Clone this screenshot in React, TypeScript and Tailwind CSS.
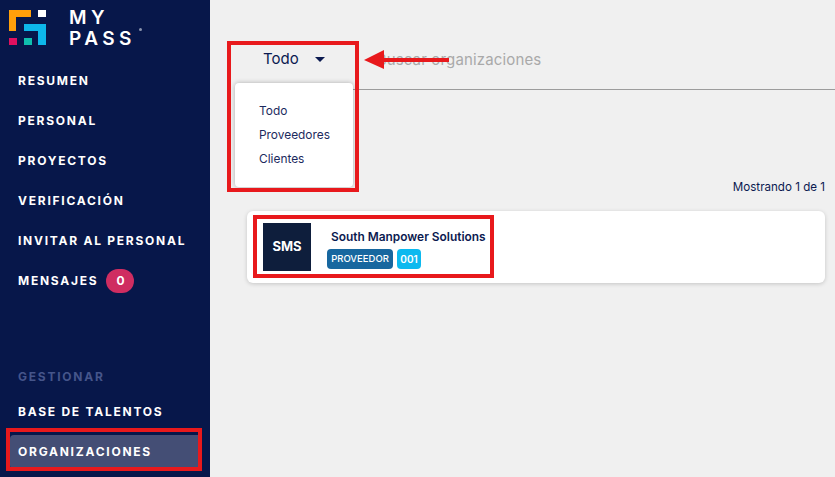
const F = "font-['Inter','Liberation_Sans',sans-serif]";

function Logo() {
  return (
    <svg width="46" height="46" viewBox="0 0 46 46" className="block">
      <path d="M0 0H22V7H7V21H0Z" fill="#ff9f0a" />
      <rect x="29" y="0" width="8" height="7" fill="#ffffff" />
      <path d="M15 14H37V35H29V21H15Z" fill="#0db7ea" />
      <rect x="0" y="28" width="8" height="7" fill="#e0105f" />
      <rect x="15" y="28" width="8" height="7" fill="#10bfae" />
    </svg>
  );
}

function NavItem({ label, children }: { label: string; children?: React.ReactNode }) {
  return (
    <div className="h-10 flex items-center gap-2 pl-[18px] text-white text-[12px] font-bold tracking-[1.75px] whitespace-nowrap">
      {label}
      {children}
    </div>
  );
}

export default function App() {
  return (
    <div className={`${F} relative flex h-[477px] w-[835px] overflow-hidden bg-[#f0f0f0]`}>
      <aside className="w-[210px] shrink-0 bg-[#07174a] flex flex-col">
        <div className="flex pl-[9px] pt-[10px] h-[61px]">
          <Logo />
          <div className="ml-[14px] -mt-[3px] text-white text-[19px] leading-[21px] font-semibold tracking-[4.4px] relative">
            <div>MY</div>
            <div>PASS</div>
            <span className="absolute left-[70px] top-[21px] h-[3px] w-[3px] rounded-full bg-[#8a94ad]" />
          </div>
        </div>
        <NavItem label="RESUMEN" />
        <NavItem label="PERSONAL" />
        <NavItem label="PROYECTOS" />
        <NavItem label="VERIFICACIÓN" />
        <NavItem label="INVITAR AL PERSONAL" />
        <NavItem label="MENSAJES">
          <span className="h-6 w-7 rounded-full bg-[#cf2d61] flex items-center justify-center tracking-normal text-[12px]">0</span>
        </NavItem>
        <div className="mt-[61px] pl-[18px] h-[30px] flex items-center text-[#45558a] text-[12px] font-bold tracking-[1.75px]">GESTIONAR</div>
        <NavItem label="BASE DE TALENTOS" />
        <div className="h-[34px] mt-[3px] ml-[10px] w-[188px] rounded-l-[4px] bg-[#444e75] flex items-center pl-2 text-white text-[12px] font-bold tracking-[1.75px]">ORGANIZACIONES</div>
      </aside>

      <main className="flex-1 relative">
        <div className="ml-[53px] mt-[47px] flex items-center h-6 text-[#0b1a50] text-[15px]">
          Todo
          <span className="ml-[16px] h-0 w-0 border-x-[5px] border-t-[5px] border-x-transparent border-t-[#0b1a50]" />
          <span className="ml-[52px] mt-[2px] text-[#a9a9a9] text-[15px] tracking-[0.15px]">Buscar organizaciones</span>
        </div>
        <div className="ml-[143px] mt-[18px] h-px bg-[#9c9c9c]" />
        <div className="mt-[90px] pr-[10px] text-right text-[11.6px] leading-[14px] text-[#0b1a50]">Mostrando 1 de 1</div>
        <div className="ml-[37px] mr-[10px] mt-[17px] h-[72px] bg-white rounded-[6px] shadow-[0_1px_4px_rgba(0,0,0,0.18)] flex items-start pl-4 pt-3">
          <div className="h-12 w-12 bg-[#0e1e3c] flex items-center justify-center text-white text-[13px] font-bold">SMS</div>
          <div className="ml-4 mt-[6px] flex flex-col items-start">
            <div className="ml-1 text-[#0b1a50] text-[11.9px] font-semibold leading-[15px] whitespace-nowrap">South Manpower Solutions</div>
            <div className="mt-[5px] flex gap-1">
              <span className="h-5 w-[66px] justify-center rounded-[4px] bg-[#17679f] text-white text-[9.5px] font-medium flex items-center">PROVEEDOR</span>
              <span className="h-5 w-6 justify-center rounded-[4px] bg-[#0cb9ef] text-white text-[10px] font-semibold flex items-center">001</span>
            </div>
          </div>
        </div>

        <div className="absolute left-[25px] top-[83px] w-[118px] h-[104px] bg-white rounded-[4px] shadow-[0_0_5px_rgba(0,0,0,0.28)] pl-6 pt-4 text-[#1c2a5e] text-[11.9px] leading-[24px]">
          <div>Todo</div>
          <div>Proveedores</div>
          <div>Clientes</div>
        </div>
      </main>

      {/* annotations */}
      <div className="absolute left-[227px] top-[41px] w-[132px] h-[151px] border-[4px] border-[#e8191c]" />
      <div className="absolute left-[253px] top-[215px] w-[241px] h-[63px] border-[4px] border-[#e8191c]" />
      <div className="absolute left-[6px] top-[428px] w-[196px] h-[43px] border-[4px] border-[#e8191c]" />
      <svg className="absolute left-[362px] top-[48px]" width="90" height="24" viewBox="0 0 90 24">
        <path d="M2 12L22 2V10H87V14H22V21Z" fill="#e8191c" />
      </svg>
    </div>
  );
}
